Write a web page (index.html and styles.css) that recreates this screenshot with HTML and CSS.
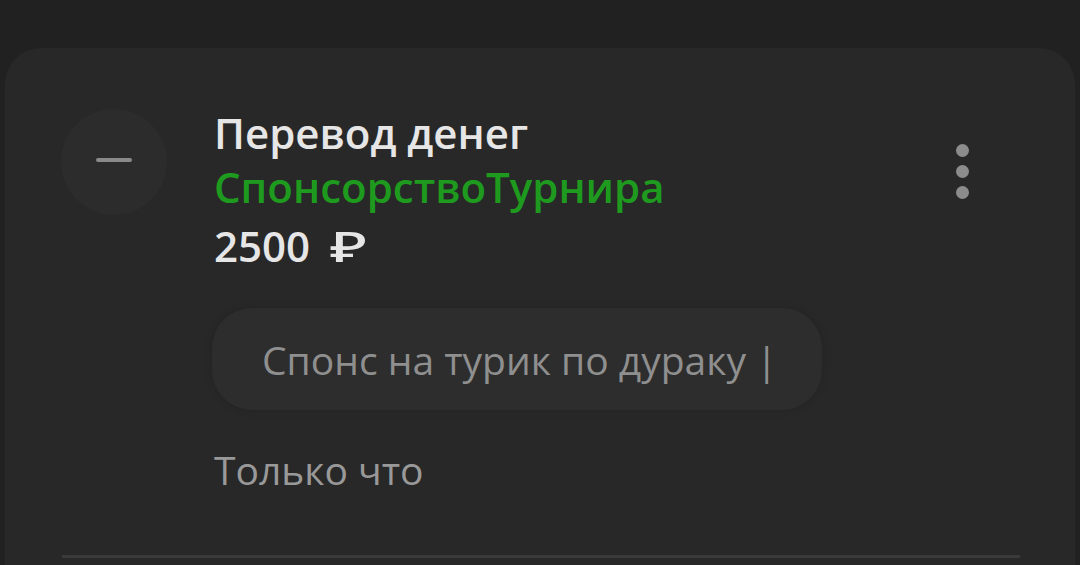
FILE: index.html
```html
<!DOCTYPE html>
<html lang="ru">
<head>
<meta charset="utf-8">
<link rel="stylesheet" href="styles.css">
</head>
<body>
<div class="card">
  <div class="row">
    <div class="avatar"><span class="minus"></span></div>
    <div class="info">
      <div class="title">Перевод денег</div>
      <div class="name">СпонсорствоТурнира</div>
      <div class="amount">2500<span class="cur">₽</span></div>
    </div>
    <div class="more"><span></span><span></span><span></span></div>
  </div>
  <div class="bubble">Спонс на турик по дураку |</div>
  <div class="time">Только что</div>
  <div class="divider"></div>
</div>
</body>
</html>
```
FILE: styles.css
```css
* { box-sizing: border-box; }
html, body { margin: 0; padding: 0; }
body {
  background: #212121;
  width: 1080px;
  height: 565px;
  overflow: hidden;
  font-family: "Open Sans", "Noto Sans", sans-serif;
}
.card {
  margin: 48px 5px 0;
  height: 517px;
  overflow: hidden;
  background: #282828;
  border-radius: 36px 36px 0 0;
  padding: 0 55px 0 57px;
}
.row {
  display: flex;
  align-items: flex-start;
  padding-top: 58px;
}
.avatar {
  width: 106px;
  height: 106px;
  margin-top: 3px;
  margin-left: -1px;
  border-radius: 50%;
  background: #2c2c2c;
  display: flex;
  align-items: center;
  justify-content: center;
  flex: none;
}
.minus {
  width: 36px;
  height: 4px;
  margin-bottom: 4px;
  border-radius: 2px;
  background: #8a8a8a;
}
.info {
  flex: 1;
  margin-left: 47px;
}
.title, .name {
  font-size: 42px;
  line-height: 54px;
  font-weight: 600;
}
.title { color: #e6e6e6; }
.name { color: #1e9b1e; }
.amount {
  margin-top: 2px;
  font-size: 42px;
  line-height: 60px;
  font-weight: 600;
  color: #e6e6e6;
}
.cur {
  display: inline-block;
  margin-left: 20px;
  font-weight: 500;
  transform: scaleX(1.5);
  transform-origin: left center;
}
.more {
  display: flex;
  flex-direction: column;
  gap: 8px;
  margin-top: 38px;
  margin-right: 51px;
}
.more span {
  width: 13px;
  height: 13px;
  border-radius: 50%;
  background: #8c8c8c;
}
.bubble {
  margin: 32px 0 0 150px;
  width: 610px;
  height: 102px;
  border-radius: 40px;
  background: #2d2d2d;
  box-shadow: 0 0 8px rgba(0,0,0,0.12);
  display: flex;
  align-items: center;
  padding-left: 50px;
  font-size: 39px;
  color: #8f8f8f;
}
.time {
  margin: 36px 0 0 152px;
  font-size: 39px;
  line-height: 48px;
  color: #999;
}
.divider {
  margin-top: 61px;
  height: 3px;
  width: 958px;
  background: #3a3a3a;
}
```
